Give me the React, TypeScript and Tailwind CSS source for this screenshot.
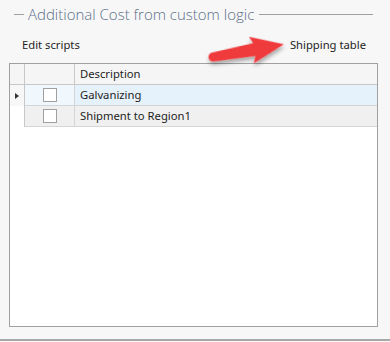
import React from "react";

const rows = [
    { id: 1, description: "Galvanizing", selected: true },
    { id: 2, description: "Shipment to Region1", selected: false },
];

function ArrowMark() {
    return (
        <svg
            className="absolute left-[200px] top-[25px]"
            width="100"
            height="50"
            viewBox="200 25 100 50"
        >
            <defs>
                <filter id="arrowShadow" x="-20%" y="-40%" width="140%" height="180%">
                    <feDropShadow dx="0" dy="3" stdDeviation="2" floodColor="#000" floodOpacity="0.35" />
                </filter>
            </defs>
            <g transform="translate(213 57) rotate(-10.2)" filter="url(#arrowShadow)">
                <path
                    d="M0,-4.5 L42,-6.5 L39,-13.5 L72,0 L39,13.5 L42,6.5 L0,4.5 A4.5,4.5 0 0 1 0,-4.5 Z"
                    fill="#f03b3e"
                />
            </g>
        </svg>
    );
}

export default function App() {
    return (
        <div
            className="relative w-[390px] h-[342px] bg-[#f7f7f7] overflow-hidden text-[11.25px] text-[#1e1e1e]"
            style={{ fontFamily: '"Noto Sans", "Open Sans", sans-serif' }}
        >
            {/* Group header */}
            <div className="flex items-center h-[28px] pl-[14px] pr-[17px]">
                <div className="w-[10px] h-px bg-[#a0a0a0]"></div>
                <span
                    className="ml-[4px] text-[15px] font-light text-[#5b6f88] leading-none whitespace-nowrap"
                    style={{ fontFamily: '"Open Sans", "Noto Sans", sans-serif' }}
                >
                    Additional Cost from custom logic
                </span>
                <div className="flex-1 ml-[5px] h-px bg-[#a0a0a0]"></div>
            </div>

            {/* Toolbar */}
            <div className="flex items-center justify-between h-[30px] pl-[22px] pr-[24px] mt-[2px]">
                <span>Edit scripts</span>
                <span>Shipping table</span>
            </div>

            {/* Grid */}
            <div className="ml-[9px] w-[369px] h-[264px] mt-[3px] border border-[#a0a0a0] bg-white">
                <div className="flex h-[21px] bg-[#f5f5f5] border-b border-[#c8c8c8]">
                    <div className="w-[15px] border-r border-[#c8c8c8]"></div>
                    <div className="w-[50px] border-r border-[#c8c8c8]"></div>
                    <div className="flex-1 flex items-center pl-[5px]">Description</div>
                </div>
                {rows.map((row) => (
                    <div key={row.id} className="flex h-[21px]">
                        <div
                            className={`w-[15px] flex items-center justify-center border-r border-[#c8c8c8] ${
                                row.selected ? "bg-[#f7f7f7]" : "bg-white"
                            }`}
                        >
                            {row.selected && (
                                <div className="w-0 h-0 border-y-[3px] border-y-transparent border-l-[4px] border-l-[#333]"></div>
                            )}
                        </div>
                        <div
                            className={`w-[50px] flex items-center justify-center border-r border-b border-[#d5d5d5] ${
                                row.selected ? "bg-[#f0f7fd]" : "bg-[#f0f0f0]"
                            }`}
                        >
                            <div className="w-[14px] h-[14px] border border-[#a0a0a0] bg-white"></div>
                        </div>
                        <div
                            className={`flex-1 flex items-center pl-[5px] border-b border-[#d5d5d5] ${
                                row.selected ? "bg-[#e5f1fb]" : "bg-[#f0f0f0]"
                            }`}
                        >
                            {row.description}
                        </div>
                    </div>
                ))}
            </div>

            {/* Bottom border */}
            <div className="mt-[12px] h-[2px] bg-[#a8a8a8]"></div>

            <ArrowMark />
        </div>
    );
}
